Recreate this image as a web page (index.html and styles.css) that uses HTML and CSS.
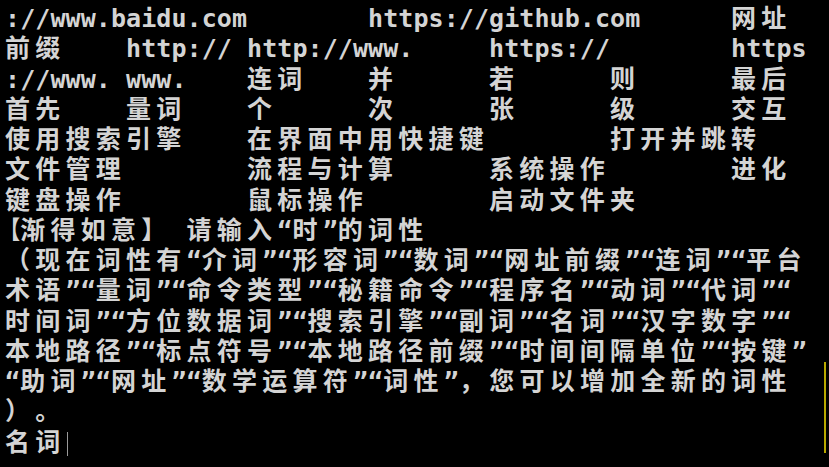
FILE: index.html
```html
<!DOCTYPE html>
<html lang="zh-CN">
<head>
<meta charset="utf-8">
<title>terminal</title>
<link rel="stylesheet" href="styles.css">
</head>
<body>
<div class="term">
  <div class="tabs">
    <div class="row">
      <span class="cell">://www.baidu.com</span>
      <span class="cell c4">https://github.com</span>
      <span class="cell c7 w">网址</span>
    </div>
    <div class="row">
      <span class="cell w">前缀</span>
      <span class="cell">http://</span>
      <span class="cell">http://www.</span>
      <span class="cell c5">https://</span>
      <span class="cell c7">https</span>
    </div>
    <div class="row">
      <span class="cell">://www.</span>
      <span class="cell">www.</span>
      <span class="cell w">连词</span>
      <span class="cell w">并</span>
      <span class="cell w">若</span>
      <span class="cell w">则</span>
      <span class="cell w">最后</span>
    </div>
    <div class="row">
      <span class="cell w">首先</span>
      <span class="cell w">量词</span>
      <span class="cell w">个</span>
      <span class="cell w">次</span>
      <span class="cell w">张</span>
      <span class="cell w">级</span>
      <span class="cell w">交互</span>
    </div>
    <div class="row">
      <span class="cell w">使用搜索引擎</span>
      <span class="cell c3 w">在界面中用快捷键</span>
      <span class="cell c6 w">打开并跳转</span>
    </div>
    <div class="row">
      <span class="cell w">文件管理</span>
      <span class="cell c3 w">流程与计算</span>
      <span class="cell c5 w">系统操作</span>
      <span class="cell c7 w">进化</span>
    </div>
    <div class="row">
      <span class="cell w">键盘操作</span>
      <span class="cell c3 w">鼠标操作</span>
      <span class="cell c5 w">启动文件夹</span>
    </div>
  </div>
  <div class="line"><span class="lb">【</span><span class="w">渐得如意】</span> <span class="w">请输入</span>“<span class="w">时</span>”<span class="w">的词性</span></div>
  <div class="line"><span class="w">（现在词性有</span>“<span class="w">介词</span>”“<span class="w">形容词</span>”“<span class="w">数词</span>”“<span class="w">网址前缀</span>”“<span class="w">连词</span>”“<span class="w">平台</span></div>
  <div class="line"><span class="w">术语</span>”“<span class="w">量词</span>”“<span class="w">命令类型</span>”“<span class="w">秘籍命令</span>”“<span class="w">程序名</span>”“<span class="w">动词</span>”“<span class="w">代词</span>”“</div>
  <div class="line"><span class="w">时间词</span>”“<span class="w">方位数据词</span>”“<span class="w">搜索引擎</span>”“<span class="w">副词</span>”“<span class="w">名词</span>”“<span class="w">汉字数字</span>”“</div>
  <div class="line"><span class="w">本地路径</span>”“<span class="w">标点符号</span>”“<span class="w">本地路径前缀</span>”“<span class="w">时间间隔单位</span>”“<span class="w">按键</span>”</div>
  <div class="line">“<span class="w">助词</span>”“<span class="w">网址</span>”“<span class="w">数学运算符</span>”“<span class="w">词性</span>”<span class="w">，您可以增加全新的词性</span></div>
  <div class="line"><span class="w">）。</span></div>
  <div class="line"><span class="w">名词</span><span class="cursor"></span></div>
</div>
<div class="scrollmark"></div>
</body>
</html>
```
FILE: styles.css
```css
html, body {
  margin: 0;
  padding: 0;
  background: #000;
  width: 829px;
  height: 467px;
  overflow: hidden;
}
body {
  position: relative;
}
.term {
  padding: 4px 0 0 5px;
  color: #d4d4d4;
  font-family: "DejaVu Sans Mono", "Noto Sans CJK SC", monospace;
  font-weight: bold;
  font-size: 25px;
  letter-spacing: 0.075px;
  text-spacing-trim: space-all;
  font-kerning: none;
}
.tabs {
  display: grid;
  grid-template-columns: repeat(7, 121px);
  grid-auto-rows: 30.25px;
}
.row {
  display: contents;
}
.cell {
  line-height: 30.25px;
  white-space: pre;
  overflow: visible;
}
.c3 { grid-column-start: 3; }
.c4 { grid-column-start: 4; }
.c5 { grid-column-start: 5; }
.c6 { grid-column-start: 6; }
.c7 { grid-column-start: 7; }
.row > .cell:first-child { grid-column-start: 1; }
.w {
  letter-spacing: 5.25px;
}
.line {
  height: 30.25px;
  line-height: 30.25px;
  white-space: pre;
}
.lb {
  display: inline-block;
  width: 15.125px;
  text-indent: -7px;
  letter-spacing: 0;
  overflow: visible;
  transform: scaleX(0.85);
  transform-origin: left center;
}
.cursor {
  display: inline-block;
  width: 1px;
  height: 24px;
  background: #9a9a9a;
  vertical-align: -5px;
  margin-left: 1px;
}
.scrollmark {
  position: absolute;
  left: 824px;
  top: 362px;
  width: 2px;
  height: 91px;
  background: #b9a800;
}
```
